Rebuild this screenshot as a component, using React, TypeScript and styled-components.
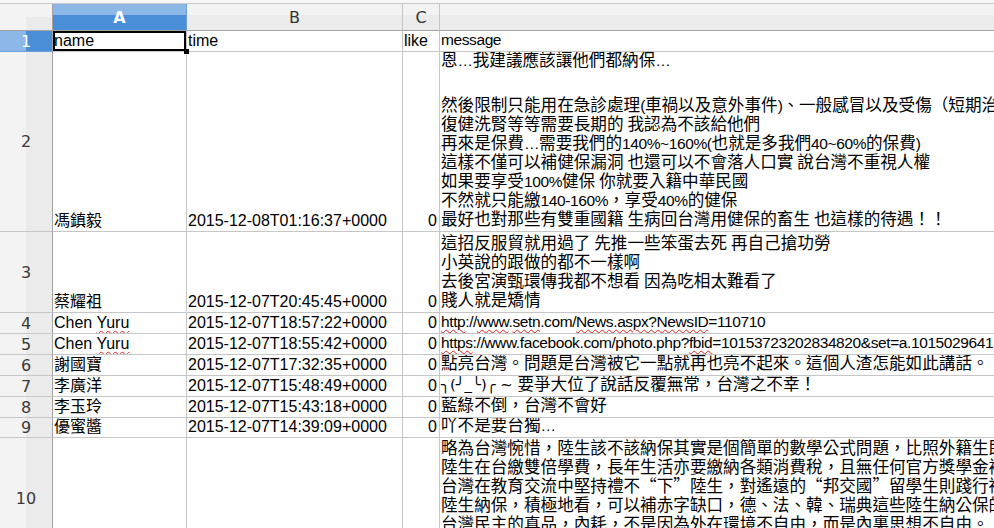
import React, { ReactNode } from 'react';
import styled, { createGlobalStyle, css } from 'styled-components';

const GlobalStyle = createGlobalStyle`
  html, body { margin: 0; padding: 0; background: #ffffff; }
  body { overflow: hidden; }
  #root { width: 994px; height: 528px; }
`;

const COLUMNS = '53px 134px 216px 37px 1fr';
const GRID = '#c6c6c6';
const HEAD_EDGE = '#a3a3a3';
const SEL_LIGHT = '#8cb7e7';
const SEL_DARK = '#4b8ed8';

const Sheet = styled.div`
  width: 994px;
  height: 528px;
  overflow: hidden;
  background: #fff;
  display: flex;
  flex-direction: column;
`;

const FormulaEdge = styled.div`
  flex: none;
  height: 4px;
  box-sizing: border-box;
  background: #f7f7f7;
  border-bottom: 1px solid #c9c9c9;
`;

const SheetRow = styled.div<{ $h: number }>`
  flex: none;
  display: grid;
  grid-template-columns: ${COLUMNS};
  height: ${p => p.$h}px;
`;

const Corner = styled.div`
  box-sizing: border-box;
  border-right: 1px solid ${HEAD_EDGE};
  border-bottom: 1px solid ${HEAD_EDGE};
  background: #f3f3f3 linear-gradient(#ebebeb, #ebebeb) no-repeat right bottom / 50% 50%;
`;

const ColumnHead = styled.div<{ $sel?: boolean; $last?: boolean }>`
  box-sizing: border-box;
  display: flex;
  align-items: center;
  justify-content: center;
  padding-top: 1px;
  border-right: ${p => (p.$last ? 'none' : `1px solid ${p.$sel ? '#6b9fd8' : GRID}`)};
  border-bottom: 1px solid ${HEAD_EDGE};
  background: ${p =>
    p.$sel
      ? `linear-gradient(${SEL_LIGHT} 0 44%, ${SEL_DARK} 44% 100%)`
      : 'linear-gradient(#f3f3f3 0 44%, #ebebeb 44% 100%)'};
  color: ${p => (p.$sel ? '#ffffff' : '#333333')};
  font-family: 'DejaVu Sans', sans-serif;
  font-size: 16px;
  font-weight: ${p => (p.$sel ? 600 : 400)};
`;

const RowHead = styled.div<{ $sel?: boolean }>`
  box-sizing: border-box;
  display: flex;
  align-items: center;
  justify-content: center;
  border-right: 1px solid ${HEAD_EDGE};
  border-bottom: 1px solid ${p => (p.$sel ? '#6b9fd8' : GRID)};
  background: ${p =>
    p.$sel
      ? `linear-gradient(to right, ${SEL_LIGHT} 0 50%, ${SEL_DARK} 50% 100%)`
      : 'linear-gradient(to right, #f3f3f3 0 50%, #ebebeb 50% 100%)'};
  color: ${p => (p.$sel ? '#ffffff' : '#3a3a3a')};
  font-family: 'DejaVu Sans', sans-serif;
  font-size: 16px;
`;

const Cell = styled.div<{ $align?: 'left' | 'right'; $sel?: boolean }>`
  box-sizing: border-box;
  position: relative;
  min-width: 0;
  overflow: ${p => (p.$sel ? 'visible' : 'hidden')};
  z-index: ${p => (p.$sel ? 1 : 'auto')};
  display: flex;
  flex-direction: column;
  justify-content: flex-end;
  text-align: ${p => p.$align ?? 'left'};
  padding: 0 2px 1px 1px;
  border-right: 1px solid ${GRID};
  border-bottom: 1px solid ${GRID};
  white-space: pre;
  color: #000;
  font-family: 'Liberation Sans', 'Noto Sans CJK TC', sans-serif;
  font-size: 16px;
  line-height: 19px;
  ${p =>
    p.$sel &&
    css`
      &::after {
        content: '';
        position: absolute;
        inset: 0;
        border: 2px solid #000;
      }
      &::before {
        content: '';
        position: absolute;
        right: -3px;
        bottom: -3px;
        width: 5px;
        height: 5px;
        background: #000;
        z-index: 2;
      }
    `}
`;

const CellText = styled.div`
  flex: none;
`;

const MessageCell = styled.div<{ $top?: boolean }>`
  box-sizing: border-box;
  min-width: 0;
  overflow: hidden;
  display: flex;
  flex-direction: column;
  justify-content: ${p => (p.$top ? 'flex-start' : 'flex-end')};
  padding: ${p => (p.$top ? '0 0 0 1px' : '0 0 3px 1px')};
  border-bottom: 1px solid ${GRID};
  white-space: pre;
  color: #000;
  font-family: 'Noto Sans CJK TC', sans-serif;
  font-size: 16.6px;
  line-height: 19px;
`;

const Line = styled.div<{ $gap?: number }>`
  flex: none;
  height: ${p => (p.$gap ? `${p.$gap}px` : '19px')};
`;

const Latin = styled.span`
  font-family: 'Liberation Sans', sans-serif;
  font-size: 15.5px;
  letter-spacing: -0.4px;
`;

const Misspelled = styled.span`
  text-decoration: underline wavy #e0201c;
  text-decoration-thickness: 1px;
  text-underline-offset: 2px;
`;

const Kaomoji = styled.span`
  font-family: 'DejaVu Sans', sans-serif;
  font-size: 14.8px;
`;

const LATIN_RUN = /([\u0020-\u007E\u2026]+)/;

function mixed(text: string): ReactNode[] {
  return text
    .split(LATIN_RUN)
    .filter(Boolean)
    .map((part, i) =>
      LATIN_RUN.test(part) ? <Latin key={i}>{part}</Latin> : <React.Fragment key={i}>{part}</React.Fragment>
    );
}

type Row = {
  n: number;
  h: number;
  name: ReactNode;
  time: string;
  like: string;
  lines: (ReactNode | null)[];
  top?: boolean;
};

const chen = (
  <>
    Chen <Misspelled>Yuru</Misspelled>
  </>
);

const rows: Row[] = [
  {
    n: 2,
    h: 180,
    name: '馮鎮毅',
    time: '2015-12-08T01:16:37+0000',
    like: '0',
    lines: [
      '恩…我建議應該讓他們都納保…',
      null,
      '然後限制只能用在急診處理(車禍以及意外事件)、一般感冒以及受傷（短期治療）',
      '復健洗腎等等需要長期的 我認為不該給他們',
      '再來是保費…需要我們的140%~160%(也就是多我們40~60%的保費)',
      '這樣不僅可以補健保漏洞 也還可以不會落人口實 說台灣不重視人權',
      '如果要享受100%健保 你就要入籍中華民國',
      '不然就只能繳140-160%，享受40%的健保',
      '最好也對那些有雙重國籍 生病回台灣用健保的畜生 也這樣的待遇！！',
    ],
  },
  {
    n: 3,
    h: 81,
    name: '蔡耀祖',
    time: '2015-12-07T20:45:45+0000',
    like: '0',
    lines: [
      '這招反服貿就用過了 先推一些笨蛋去死 再自己搶功勞',
      '小英說的跟做的都不一樣啊',
      '去後宮演甄環傳我都不想看 因為吃相太難看了',
      '賤人就是矯情',
    ],
  },
  {
    n: 4,
    h: 21,
    name: chen,
    time: '2015-12-07T18:57:22+0000',
    like: '0',
    lines: [
      <Latin>
        <Misspelled>http</Misspelled>://<Misspelled>www</Misspelled>.<Misspelled>setn</Misspelled>.com/
        <Misspelled>News.aspx?NewsID</Misspelled>=110710
      </Latin>,
    ],
  },
  {
    n: 5,
    h: 21,
    name: chen,
    time: '2015-12-07T18:55:42+0000',
    like: '0',
    lines: [
      <Latin>
        <Misspelled>https</Misspelled>://www.facebook.com/photo.php?<Misspelled>fbid</Misspelled>
        =10153723202834820&amp;set=a.10150296413224820.346052.615814819&amp;type=3
      </Latin>,
    ],
  },
  {
    n: 6,
    h: 21,
    name: '謝國寶',
    time: '2015-12-07T17:32:35+0000',
    like: '0',
    lines: ['點亮台灣。問題是台灣被它一點就再也亮不起來。這個人渣怎能如此講話。'],
  },
  {
    n: 7,
    h: 21,
    name: '李廣洋',
    time: '2015-12-07T15:48:49+0000',
    like: '0',
    lines: [
      <>
        <Kaomoji>╮(╯_╰)╭ ~ </Kaomoji>要爭大位了說話反覆無常，台灣之不幸！
      </>,
    ],
  },
  {
    n: 8,
    h: 21,
    name: '李玉玲',
    time: '2015-12-07T15:43:18+0000',
    like: '0',
    lines: ['藍綠不倒，台灣不會好'],
  },
  {
    n: 9,
    h: 20,
    name: '優蜜醬',
    time: '2015-12-07T14:39:09+0000',
    like: '0',
    lines: ['吖不是要台獨…'],
  },
  {
    n: 10,
    h: 122,
    name: '',
    time: '',
    like: '',
    top: true,
    lines: [
      '略為台灣惋惜，陸生該不該納保其實是個簡單的數學公式問題，比照外籍生即可。',
      '陸生在台繳雙倍學費，長年生活亦要繳納各類消費稅，且無任何官方獎學金補助，',
      '台灣在教育交流中堅持禮不“下”陸生，對遙遠的“邦交國”留學生則踐行禮遇，',
      '陸生納保，積極地看，可以補赤字缺口，德、法、韓、瑞典這些陸生納公保的國家',
      '台灣民主的真品，內耗，不是因為外在環境不自由，而是內裏思想不自由。',
      '',
    ],
  },
];

export default function App() {
  return (
    <>
      <GlobalStyle />
      <Sheet>
        <FormulaEdge />
        <SheetRow $h={27}>
          <Corner />
          <ColumnHead $sel>A</ColumnHead>
          <ColumnHead>B</ColumnHead>
          <ColumnHead>C</ColumnHead>
          <ColumnHead $last />
        </SheetRow>
        <SheetRow $h={21}>
          <RowHead $sel>1</RowHead>
          <Cell $sel>
            <CellText>name</CellText>
          </Cell>
          <Cell>
            <CellText>time</CellText>
          </Cell>
          <Cell>
            <CellText>like</CellText>
          </Cell>
          <MessageCell>
            <Line>
              <Latin>message</Latin>
            </Line>
          </MessageCell>
        </SheetRow>
        {rows.map(r => (
          <SheetRow key={r.n} $h={r.h}>
            <RowHead>{r.n}</RowHead>
            <Cell>
              <CellText>{r.name}</CellText>
            </Cell>
            <Cell>
              <CellText>{r.time}</CellText>
            </Cell>
            <Cell $align="right">
              <CellText>{r.like}</CellText>
            </Cell>
            <MessageCell $top={r.top}>
              {r.lines.map((l, i) =>
                l === null ? (
                  <Line key={i} $gap={26} />
                ) : (
                  <Line key={i}>{typeof l === 'string' ? mixed(l) : l}</Line>
                )
              )}
            </MessageCell>
          </SheetRow>
        ))}
      </Sheet>
    </>
  );
}
